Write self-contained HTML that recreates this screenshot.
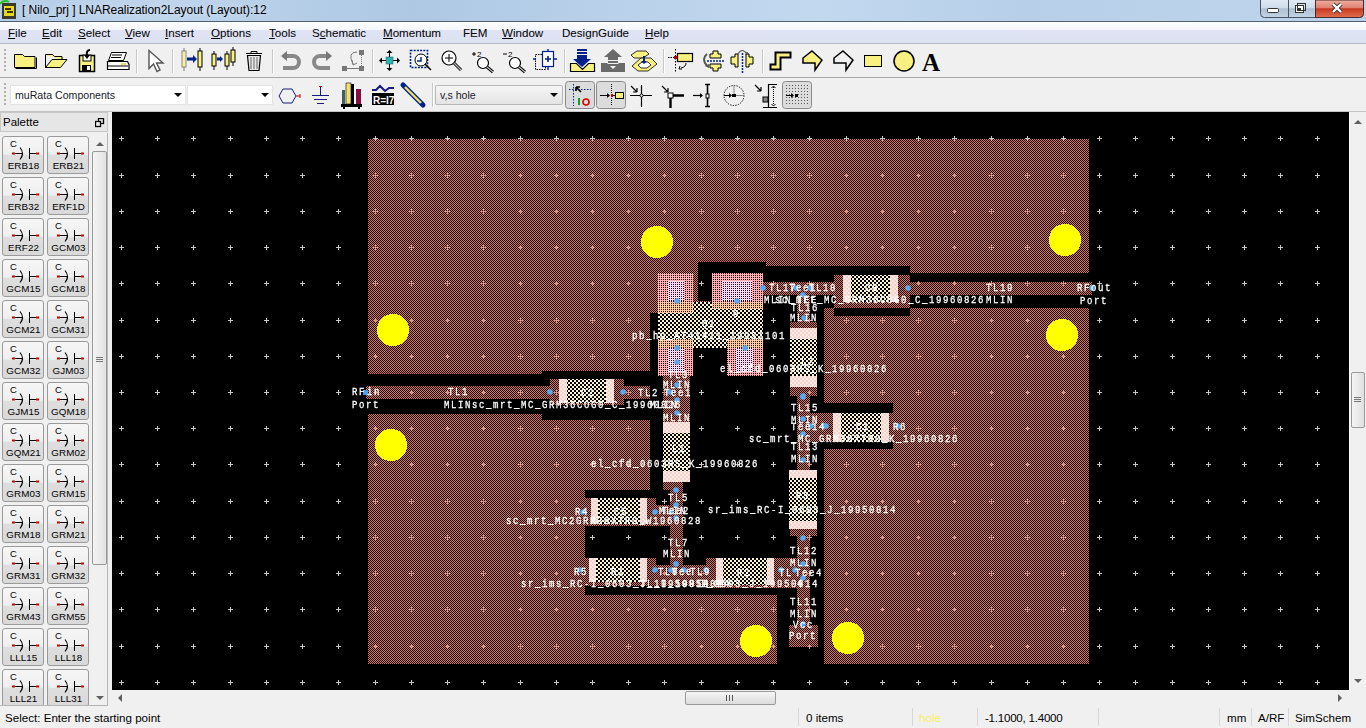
<!DOCTYPE html>
<html><head><meta charset="utf-8">
<style>
*{margin:0;padding:0;box-sizing:border-box}
html,body{width:1366px;height:728px;overflow:hidden;background:#f0f0f0;font-family:"Liberation Sans",sans-serif;position:relative}
.abs{position:absolute}
#title{left:0;top:0;width:1366px;height:22px;background:linear-gradient(90deg,#b4cde8 0%,#bed5ec 12%,#aec8e4 30%,#b9d1ea 45%,#c2d8ef 60%,#b7cfe9 75%,#bcd3eb 90%,#b9d1ea 100%);border-bottom:1px solid #545f6e}
#title .t{left:22px;top:3px;font-size:12px;color:#000;white-space:nowrap;letter-spacing:-0.05px;text-shadow:0 0 6px rgba(255,255,255,0.6)}
#menubar{left:0;top:22px;width:1366px;height:22px;background:linear-gradient(#fcfdfe 0,#f5f7fc 36%,#dfe3f3 37%,#dde2f3 100%);border-bottom:1px solid #b4b9c6}
.mi{position:absolute;top:3.5px;font-size:11.6px;white-space:nowrap;color:#000}
#tb1{left:0;top:44px;width:1366px;height:34px;background:#f0f0f0;border-bottom:1px solid #a8a8a8}
#tb2{left:0;top:78px;width:1366px;height:34px;background:#f0f0f0}
.grip{position:absolute;left:4px;width:2px;background:repeating-linear-gradient(#b0b0b0 0 2px,transparent 2px 4px)}
.combo{position:absolute;background:#fff;border:1px solid #e3e3e3;font-size:10.6px;color:#1a1a2a;white-space:nowrap;padding:3px 0 0 4px}
.dd{position:absolute;width:0;height:0;border-left:4px solid transparent;border-right:4px solid transparent;border-top:4px solid #000}
#palhead{left:0;top:112px;width:108px;height:20px;background:#e6e6e6;border:1px solid #c8c8c8}
#palhead span{position:absolute;left:2px;top:3px;font-size:11.5px;color:#000}
#palette{left:0;top:132px;width:111px;height:574px;background:#f0f0f0}
.pb{position:absolute;width:42px;height:38px;border:1px solid #9a9a9a;border-radius:3px;background:linear-gradient(#f6f6f6 0,#efefef 48%,#dedede 50%,#d9d9d9 100%)}
.pb span{position:absolute;left:0;width:41px;top:23px;text-align:center;font-size:9.8px;color:#000;letter-spacing:0.1px}
#canvasbox{left:112px;top:112px;width:1237px;height:578px;background:#000;overflow:hidden}
#vscroll{left:1349px;top:112px;width:17px;height:578px;background:#f0f0f0;border-left:1px solid #fafafa}
#hscroll{left:112px;top:690px;width:1238px;height:16px;background:#f0f0f0}
#status{left:0;top:706px;width:1366px;height:22px;background:#f0f0f0}
#status span{position:absolute;top:5px;font-size:11.6px;white-space:nowrap;color:#000}
.ssep{position:absolute;top:708px;width:1px;height:18px;background:#d8d8d8}
.lb{position:absolute;font-family:"Liberation Mono",monospace;font-size:9px;line-height:10px;color:#fff;white-space:pre;letter-spacing:1.6px;will-change:transform;transform:scaleY(1.18);transform-origin:0 0;-webkit-text-stroke:0.25px #fff}
.thumb{position:absolute;border:1px solid #9a9a9a;border-radius:2px;background:linear-gradient(90deg,#f4f4f4,#e2e2e2)}
</style></head><body>
<div id="title" class="abs"><span class="abs t">[ Nilo_prj ] LNARealization2Layout (Layout):12</span></div>
<svg class="abs" style="left:0;top:0" width="22" height="22" viewBox="0 0 22 22">
<rect x="2" y="3" width="14" height="16" fill="#3a3a2a"/><rect x="4" y="6" width="10" height="10" fill="#e8d820"/><path d="M5 9h6M7 12h6" stroke="#000" stroke-width="1.5"/>
<path d="M0 4q4 -5 9 -2" stroke="#30c030" stroke-width="2" fill="none"/>
</svg>
<svg class="abs" style="left:1258px;top:0" width="108" height="20" viewBox="0 0 108 20">
<defs><linearGradient id="wb" x1="0" y1="0" x2="0" y2="1"><stop offset="0" stop-color="#dfe9f5"/><stop offset="0.45" stop-color="#cfdcea"/><stop offset="0.5" stop-color="#aebfd4"/><stop offset="1" stop-color="#c4d4e6"/></linearGradient>
<linearGradient id="cb" x1="0" y1="0" x2="0" y2="1"><stop offset="0" stop-color="#f0b0a0"/><stop offset="0.45" stop-color="#e08070"/><stop offset="0.5" stop-color="#c83820"/><stop offset="1" stop-color="#e07050"/></linearGradient></defs>
<path d="M2.5 0v13.5a4 4 0 0 0 4 4h95a4 4 0 0 0 4 -4v-13.5" fill="url(#wb)" stroke="#4a5260"/>
<path d="M57.5 0v17.5h44a4 4 0 0 0 4 -4v-13.5z" fill="url(#cb)" stroke="#4a2a2a"/>
<path d="M30.5 0v17.5" stroke="#4a5260"/>
<rect x="9.5" y="8.5" width="11" height="4" rx="1" fill="#fff" stroke="#333"/>
<rect x="37.5" y="5.5" width="8" height="7" fill="#fff" stroke="#333"/><rect x="39.5" y="3.5" width="8" height="7" fill="none" stroke="#333"/><rect x="40" y="8" width="3" height="2" fill="#333"/>
<path d="M75 4l8 8M83 4l-8 8" stroke="#333" stroke-width="4"/><path d="M75 4l8 8M83 4l-8 8" stroke="#fff" stroke-width="2.4"/>
</svg>
<div id="menubar" class="abs">
<span class="mi" style="left:8px"><u style="text-decoration:underline">F</u>ile</span>
<span class="mi" style="left:42px"><u style="text-decoration:underline">E</u>dit</span>
<span class="mi" style="left:78px"><u style="text-decoration:underline">S</u>elect</span>
<span class="mi" style="left:125px"><u style="text-decoration:underline">V</u>iew</span>
<span class="mi" style="left:165px"><u style="text-decoration:underline">I</u>nsert</span>
<span class="mi" style="left:211px"><u style="text-decoration:underline">O</u>ptions</span>
<span class="mi" style="left:269px"><u style="text-decoration:underline">T</u>ools</span>
<span class="mi" style="left:312px">S<u style="text-decoration:underline">c</u>hematic</span>
<span class="mi" style="left:383px"><u style="text-decoration:underline">M</u>omentum</span>
<span class="mi" style="left:463px">FEM</span>
<span class="mi" style="left:502px"><u style="text-decoration:underline">W</u>indow</span>
<span class="mi" style="left:562px">DesignGuide</span>
<span class="mi" style="left:645px"><u style="text-decoration:underline">H</u>elp</span>
</div>
<div id="tb1" class="abs"><div class="grip" style="top:5px;height:24px"></div></div>
<div id="tb2" class="abs"><div class="grip" style="top:5px;height:24px"></div></div>
<svg class="abs" style="left:0;top:0" width="1366" height="112" viewBox="0 0 1366 112"><path d="M136.5 49v24" stroke="#c8c8c8"/><path d="M137.5 49v24" stroke="#fff"/><path d="M172.5 49v24" stroke="#c8c8c8"/><path d="M173.5 49v24" stroke="#fff"/><path d="M272.5 49v24" stroke="#c8c8c8"/><path d="M273.5 49v24" stroke="#fff"/><path d="M372.5 49v24" stroke="#c8c8c8"/><path d="M373.5 49v24" stroke="#fff"/><path d="M564.5 49v24" stroke="#c8c8c8"/><path d="M565.5 49v24" stroke="#fff"/><path d="M663.5 49v24" stroke="#c8c8c8"/><path d="M664.5 49v24" stroke="#fff"/><path d="M762.5 49v24" stroke="#c8c8c8"/><path d="M763.5 49v24" stroke="#fff"/><path d="M432.5 83v24" stroke="#c8c8c8"/><path d="M433.5 83v24" stroke="#fff"/><path d="M14.5 54.5h8l2 2h10.5v11h-20.5z" fill="#f8f080" stroke="#000"/><path d="M15.5 68.5h21v-11" stroke="#000" fill="none" stroke-width="1"/><path d="M45.5 54.5h7l2 2h7.5v4" fill="#f8f080" stroke="#000"/><path d="M45.5 54.5v13h15l6.5-8h-15l-6.5 8" fill="#f8f080" stroke="#000"/><path d="M79.5 55.5h15v16h-15z" fill="#f8f080" stroke="#000" stroke-width="1.5"/><rect x="83" y="55" width="8" height="6" fill="#fff" stroke="#000"/><rect x="82" y="65" width="9" height="6" fill="#000"/><rect x="87" y="66" width="3" height="4" fill="#fff"/><path d="M90 50q-4 0 -3 6" stroke="#000" stroke-width="2" fill="none"/><path d="M84 55l3 4l3-4z" fill="#000"/><path d="M111.5 52.5h15l-3 8h-15z" fill="#fff" stroke="#000"/><path d="M112 55h10M111 57.5h10" stroke="#000"/><path d="M107.5 61.5h20l1.5 3v5h-21.5z" fill="#fff" stroke="#000" stroke-width="1.2"/><path d="M108 66h20" stroke="#000"/><rect x="121" y="63" width="5" height="2" fill="#e8e070"/><path d="M149 50.5v18l4.5-4.5l3.5 7.5l3-1.5l-3.5-7h6.5z" fill="#fff" stroke="#555" stroke-width="1.4"/><rect x="182" y="51" width="4" height="16" fill="#f8f0a0" stroke="#888"/><path d="M184 48v3M184 67v4" stroke="#777"/><path d="M187 59h6" stroke="#00208a" stroke-width="3"/><path d="M193 55l4 4l-4 4z" fill="#00208a"/><rect x="198" y="51" width="4" height="16" fill="#f8f080" stroke="#000"/><path d="M200 48v3M200 67v4" stroke="#000"/><rect x="212" y="54" width="4" height="12" fill="#f8f080" stroke="#000"/><path d="M214 51v3M214 66v4" stroke="#000"/><path d="M217 59h3" stroke="#00208a" stroke-width="3"/><path d="M220 56l3 3l-3 3z" fill="#00208a"/><rect x="225" y="54" width="4" height="12" fill="#f8f080" stroke="#000"/><path d="M227 51v3M227 66v4" stroke="#000"/><rect x="231" y="50" width="4" height="12" fill="#f8f080" stroke="#000"/><path d="M233 47v3M233 62v4" stroke="#000"/><path d="M246 53.5h16M251 53.5v-2h6v2" stroke="#000" fill="#ddd"/><path d="M247.5 55.5h13l-1.5 15h-10z" fill="#e8e8e8" stroke="#000" stroke-width="1.2"/><path d="M251 57v12M254 57v12M257 57v12" stroke="#666"/><path d="M284 56h9a6 6 0 0 1 0 12h-10" stroke="#888" stroke-width="4" fill="none"/><path d="M281 56l6-5v10z" fill="#777"/><path d="M329 56h-9a6 6 0 0 0 0 12h10" stroke="#888" stroke-width="4" fill="none"/><path d="M332 56l-6-5v10z" fill="#777"/><rect x="342" y="66" width="5" height="5" fill="#777"/><rect x="359" y="66" width="5" height="5" fill="#777"/><rect x="359" y="50" width="5" height="5" fill="#777"/><path d="M347 68.5h12" stroke="#777"/><path d="M361.5 55v11" stroke="#777" stroke-dasharray="1 1"/><path d="M357 52q-10 0 -4 12" stroke="#777" fill="none"/><path d="M352 60l1 5l4-2" stroke="#777" fill="none"/><rect x="386" y="57" width="7" height="7" fill="#30b0b0" stroke="#006060" stroke-width="0.5"/><path d="M389.5 50l-3 3h6zM389.5 71l-3-3h6zM379 60.5l3-3v6zM400 60.5l-3-3v6z" fill="#000"/><path d="M389.5 52v5M389.5 64v5M381 60.5h5M393 60.5h5" stroke="#000"/><rect x="410.5" y="50.5" width="17" height="17" fill="none" stroke="#00208a" stroke-width="1.6" stroke-dasharray="2 1.2"/><circle cx="421" cy="60" r="6" fill="#fff" stroke="#000"/><path d="M425 64l6 6" stroke="#000" stroke-width="1.5"/><path d="M417 61h4v-4" stroke="#00208a" stroke-width="1.5" fill="none"/><circle cx="449" cy="58" r="7" fill="#fff" stroke="#000" stroke-width="1.2"/><path d="M445 58h8M449 54v8" stroke="#000"/><path d="M454 63l7 7" stroke="#000" stroke-width="3"/><path d="M454 63l7 7" stroke="#bbb" stroke-width="1.2"/><path d="M472 54h4M474 52v4" stroke="#000"/><text x="477" y="57" font-size="8" font-family="Liberation Sans" fill="#000">2</text><circle cx="483" cy="63" r="5.5" fill="#fff" stroke="#000" stroke-width="1.2"/><path d="M487 67l6 5" stroke="#000" stroke-width="3"/><path d="M487 67l6 5" stroke="#bbb" stroke-width="1.2"/><path d="M503 54h4" stroke="#000"/><text x="508" y="57" font-size="8" font-family="Liberation Sans" fill="#000">2</text><circle cx="515" cy="63" r="5.5" fill="#fff" stroke="#000" stroke-width="1.2"/><path d="M519 67l6 5" stroke="#000" stroke-width="3"/><path d="M519 67l6 5" stroke="#bbb" stroke-width="1.2"/><rect x="535.5" y="54.5" width="10" height="15" fill="none" stroke="#000" stroke-dasharray="1.5 1"/><rect x="542.5" y="51.5" width="11" height="15" fill="#fff" stroke="#00208a" stroke-width="1.2"/><path d="M545 59h6M548 56v6" stroke="#00208a" stroke-width="1.6"/><path d="M533 59h3M554 59h3M548 49v2M548 67v3" stroke="#00208a" stroke-width="1.4"/><path d="M570.5 63.5h6l6 6l6-6h6v8h-24z" fill="#f8f080" stroke="#000" stroke-width="1.2"/><rect x="577" y="49" width="10" height="2" fill="#00208a"/><rect x="577" y="52" width="10" height="2" fill="#00208a"/><path d="M577 55h10v4h4l-9 8l-9-8h4z" fill="#00208a"/><path d="M601 63h6l6 6l6-6h6v9h-24z" fill="#6a6a6a"/><path d="M613 49l9 8h-4v3h-10v-3h-4z" fill="#6a6a6a"/><rect x="608" y="61" width="10" height="2" fill="#6a6a6a"/><rect x="608" y="64" width="10" height="2" fill="#6a6a6a"/><path d="M637 51h9l3 3l-6 4h-9l-3-3z" fill="#f8f080" stroke="#000" stroke-width="0.8"/><path d="M632 66l9-8h10l6 6l-9 7h-10z" fill="#f8f080" stroke="#000" stroke-width="0.8"/><path d="M638 65l4-3h6l3 3l-4 3h-6z" fill="#fff" stroke="#000" stroke-width="0.8"/><path d="M643 56v5h-2l3 3l3-3h-2v-5z" fill="#00208a"/><path d="M675.5 49v24" stroke="#000" stroke-dasharray="1.5 1.5"/><path d="M668 57.5h6" stroke="#000" stroke-dasharray="1.5 1"/><rect x="674" y="56" width="3" height="3" fill="#c00000"/><rect x="677.5" y="53.5" width="15" height="8" fill="#f8f080" stroke="#000" stroke-width="1.2"/><path d="M686 63q0 4 -5 5" stroke="#000" fill="none"/><path d="M680 66l-1 3l3 0" stroke="#000" fill="none"/><path d="M713 51h5v3h3v4h-11v-4h3z" fill="#f8f080" stroke="#000"/><path d="M710 64h11v4h-3v3h-5v-3h-3z" fill="#f8f080" stroke="#000"/><path d="M707 61h17" stroke="#00208a" stroke-width="1.5" stroke-dasharray="2 1"/><path d="M707 54q-6 5 0 12" stroke="#555" stroke-width="2" fill="none"/><path d="M705 66l4 2l0-4z" fill="#555"/><path d="M731 57h4v-3h3v13h-3v-3h-4z" fill="#f8f080" stroke="#000"/><path d="M753 57h-4v-3h-3v13h3v-3h4z" fill="#f8f080" stroke="#000"/><path d="M742.5 53v20" stroke="#00208a" stroke-width="1.5" stroke-dasharray="2 1"/><path d="M738 54q4 -7 9 0" stroke="#555" stroke-width="1.2" fill="none"/><path d="M745 53l3 2l0-3z" fill="#555"/><path d="M770.5 69.5h10v-12h10v-5h-15v12h-5z" fill="#f8f080" stroke="#000" stroke-width="2" transform="translate(0,0)"/><path d="M812 51l10 9l-7 10v-7h-12v-5z" fill="#f8f080" stroke="#000" stroke-width="1.5"/><path d="M843 51l10 9l-7 10v-7h-12v-5z" fill="none" stroke="#000" stroke-width="1.5"/><rect x="864.5" y="55.5" width="17" height="11" fill="#f8f080" stroke="#000"/><circle cx="904" cy="61" r="10" fill="#f8f080" stroke="#000" stroke-width="1.5"/><text x="922" y="71" font-size="25" font-weight="bold" font-family="Liberation Serif" fill="#000">A</text><path d="M283 89h9l4 7l-4 7h-9l-4-7z" fill="none" stroke="#1a1a80" stroke-width="1"/><path d="M296 96h4M300 94v4" stroke="#c00000" stroke-width="1"/><path d="M320.5 87v8M312 95.5h17M314 99.5h13M317 103.5h7" stroke="#1a1a80" stroke-width="1"/><path d="M319 86.5h3" stroke="#c00000"/><rect x="341" y="104" width="21" height="3" fill="#000"/><rect x="343" y="106" width="2" height="3" fill="#000"/><rect x="358" y="106" width="2" height="3" fill="#000"/><rect x="342" y="90" width="3" height="14" fill="#406060"/><rect x="346" y="83" width="5" height="21" fill="#f0e070" stroke="#000" stroke-width="0.6"/><rect x="351" y="84" width="3" height="20" fill="#000"/><rect x="354" y="86" width="2" height="18" fill="#f8f8f8"/><rect x="356" y="89" width="5" height="15" fill="#801040"/><path d="M372 90h4l4-4l5 5l4-3h5" stroke="#1a1a80" stroke-width="2" fill="none"/><rect x="372" y="93" width="22" height="12" fill="#000"/><text x="373" y="104" font-size="10" font-family="Liberation Sans" fill="#fff" font-weight="bold">R=I7</text><path d="M403 85l20 20" stroke="#00208a" stroke-width="5" stroke-linecap="round"/><path d="M405 87l16 16" stroke="#f0e060" stroke-width="2.4"/><rect x="565.5" y="81.5" width="29" height="27" rx="3" fill="#dcdcdc" stroke="#8a8a8a"/><rect x="596.5" y="81.5" width="29" height="27" rx="3" fill="#dcdcdc" stroke="#8a8a8a"/><rect x="782.5" y="81.5" width="29" height="27" rx="3" fill="#dcdcdc" stroke="#8a8a8a"/><path d="M569 89.5h22M573.5 84v22" stroke="#00208a" stroke-dasharray="1.5 1.5"/><path d="M576 87l5 5M576 87h4M576 87v4" stroke="#000" stroke-width="1.6"/><path d="M579 98v7" stroke="#10a030" stroke-width="2"/><circle cx="586" cy="102" r="3" fill="none" stroke="#e00000" stroke-width="1.6"/><path d="M600 95.5h9" stroke="#000"/><path d="M607 93l3 2.5l-3 2.5z" fill="#000"/><path d="M611.5 84v22" stroke="#000" stroke-dasharray="1 1"/><rect x="611" y="94" width="2" height="3" fill="#c00000"/><path d="M613 95.5h3" stroke="#000"/><rect x="615.5" y="92.5" width="8" height="6" fill="#f8f080" stroke="#000"/><path d="M630 95.5h22M641.5 85v22" stroke="#000" stroke-width="1.2"/><circle cx="641.5" cy="95.5" r="1.5" fill="#fff" stroke="#000"/><path d="M631 86l6 6M637 92h-4M637 92v-4" stroke="#000" stroke-width="1.2"/><path d="M670.5 96v12M670 95.5h14" stroke="#000" stroke-width="2.4"/><rect x="668" y="93" width="5" height="5" fill="#fff" stroke="#000"/><path d="M662 86l6 6M668 92h-4M668 92v-4" stroke="#000" stroke-width="1.2"/><path d="M693 95.5h9" stroke="#000" stroke-width="1.2"/><path d="M700 93l3 2.5l-3 2.5z" fill="#000"/><path d="M707.5 84v23M705 84.5h5M705 106.5h5" stroke="#000" stroke-width="1.6"/><rect x="706" y="94" width="3" height="4" fill="#fff" stroke="#000"/><circle cx="734" cy="95.5" r="10" fill="none" stroke="#000" stroke-dasharray="1.3 1.3"/><path d="M734 85.5v10h10" stroke="#888" fill="none"/><path d="M724 95.5h7" stroke="#000"/><path d="M729 93l3 2.5l-3 2.5z" fill="#000"/><rect x="732" y="94" width="4" height="3" fill="#000"/><path d="M755 85l6 6M761 91h-4M761 91v-4" stroke="#000" stroke-width="1.2"/><path d="M769 84.5h8M763 107.5h14M768.5 84v23" stroke="#000" stroke-width="1.2"/><rect x="763" y="97" width="5" height="5" fill="#888" stroke="#000"/><path d="M773.5 87v18" stroke="#000" stroke-dasharray="1 1"/><path d="M771.5 88l2-2l2 2M771.5 104l2 2l2-2" stroke="#000" fill="none"/><rect x="786" y="85" width="1" height="1" fill="#555"/><rect x="786" y="88" width="1" height="1" fill="#555"/><rect x="786" y="91" width="1" height="1" fill="#555"/><rect x="786" y="94" width="1" height="1" fill="#555"/><rect x="786" y="97" width="1" height="1" fill="#555"/><rect x="786" y="100" width="1" height="1" fill="#555"/><rect x="786" y="103" width="1" height="1" fill="#555"/><rect x="789" y="85" width="1" height="1" fill="#555"/><rect x="789" y="88" width="1" height="1" fill="#555"/><rect x="789" y="91" width="1" height="1" fill="#555"/><rect x="789" y="94" width="1" height="1" fill="#555"/><rect x="789" y="97" width="1" height="1" fill="#555"/><rect x="789" y="100" width="1" height="1" fill="#555"/><rect x="789" y="103" width="1" height="1" fill="#555"/><rect x="792" y="85" width="1" height="1" fill="#555"/><rect x="792" y="88" width="1" height="1" fill="#555"/><rect x="792" y="91" width="1" height="1" fill="#555"/><rect x="792" y="94" width="1" height="1" fill="#555"/><rect x="792" y="97" width="1" height="1" fill="#555"/><rect x="792" y="100" width="1" height="1" fill="#555"/><rect x="792" y="103" width="1" height="1" fill="#555"/><rect x="795" y="85" width="1" height="1" fill="#555"/><rect x="795" y="88" width="1" height="1" fill="#555"/><rect x="795" y="91" width="1" height="1" fill="#555"/><rect x="795" y="94" width="1" height="1" fill="#555"/><rect x="795" y="97" width="1" height="1" fill="#555"/><rect x="795" y="100" width="1" height="1" fill="#555"/><rect x="795" y="103" width="1" height="1" fill="#555"/><rect x="798" y="85" width="1" height="1" fill="#555"/><rect x="798" y="88" width="1" height="1" fill="#555"/><rect x="798" y="91" width="1" height="1" fill="#555"/><rect x="798" y="94" width="1" height="1" fill="#555"/><rect x="798" y="97" width="1" height="1" fill="#555"/><rect x="798" y="100" width="1" height="1" fill="#555"/><rect x="798" y="103" width="1" height="1" fill="#555"/><rect x="801" y="85" width="1" height="1" fill="#555"/><rect x="801" y="88" width="1" height="1" fill="#555"/><rect x="801" y="91" width="1" height="1" fill="#555"/><rect x="801" y="94" width="1" height="1" fill="#555"/><rect x="801" y="97" width="1" height="1" fill="#555"/><rect x="801" y="100" width="1" height="1" fill="#555"/><rect x="801" y="103" width="1" height="1" fill="#555"/><rect x="804" y="85" width="1" height="1" fill="#555"/><rect x="804" y="88" width="1" height="1" fill="#555"/><rect x="804" y="91" width="1" height="1" fill="#555"/><rect x="804" y="94" width="1" height="1" fill="#555"/><rect x="804" y="97" width="1" height="1" fill="#555"/><rect x="804" y="100" width="1" height="1" fill="#555"/><rect x="804" y="103" width="1" height="1" fill="#555"/><rect x="807" y="85" width="1" height="1" fill="#555"/><rect x="807" y="88" width="1" height="1" fill="#555"/><rect x="807" y="91" width="1" height="1" fill="#555"/><rect x="807" y="94" width="1" height="1" fill="#555"/><rect x="807" y="97" width="1" height="1" fill="#555"/><rect x="807" y="100" width="1" height="1" fill="#555"/><rect x="807" y="103" width="1" height="1" fill="#555"/><path d="M786 95.5h7" stroke="#000"/><path d="M791 93l3 2.5l-3 2.5z" fill="#000"/><rect x="795" y="94" width="3" height="3" fill="#000"/></svg><div class="combo" style="left:10px;top:85px;width:176px;height:20px">muRata Components</div><div class="dd" style="left:174px;top:93px"></div><div class="combo" style="left:187px;top:85px;width:86px;height:20px"></div><div class="dd" style="left:261px;top:93px"></div><div class="combo" style="left:435px;top:85px;width:128px;height:20px;border:1px solid #b8b8b8;border-radius:2px;background:linear-gradient(#f6f6f6,#e4e4e4)">v,s hole</div><div class="dd" style="left:550px;top:93px"></div>
<div class="abs" style="left:0;top:111px;width:1366px;height:1px;background:#c4c4c4"></div>
<div id="palhead" class="abs"><span>Palette</span>
<svg class="abs" style="left:94px;top:5px" width="10" height="10" viewBox="0 0 10 10"><rect x="3.5" y="0.5" width="5" height="5" fill="none" stroke="#000" stroke-width="1.3"/><rect x="0.5" y="3.5" width="5" height="5" fill="#f0f0f0" stroke="#000" stroke-width="1.3"/></svg>
</div>
<div id="palette" class="abs"><div class="pb" style="left:2px;top:4px"><span>ERB18</span><svg class="abs" style="left:0;top:0" width="40" height="24" viewBox="0 0 40 24"><text x="7" y="10" font-size="9.5" font-family="Liberation Sans" fill="#000">C</text><path d="M10 16.5h9M27 16.5h8M26.5 11v11" stroke="#000" stroke-width="1"/><path d="M17 10.5q5 6 0 12" stroke="#000" fill="none" stroke-width="1.1"/><rect x="9" y="15.5" width="3" height="2" fill="#d00000"/><rect x="33" y="15.5" width="3" height="2" fill="#d00000"/></svg></div><div class="pb" style="left:47px;top:4px"><span>ERB21</span><svg class="abs" style="left:0;top:0" width="40" height="24" viewBox="0 0 40 24"><text x="7" y="10" font-size="9.5" font-family="Liberation Sans" fill="#000">C</text><path d="M10 16.5h9M27 16.5h8M26.5 11v11" stroke="#000" stroke-width="1"/><path d="M17 10.5q5 6 0 12" stroke="#000" fill="none" stroke-width="1.1"/><rect x="9" y="15.5" width="3" height="2" fill="#d00000"/><rect x="33" y="15.5" width="3" height="2" fill="#d00000"/></svg></div><div class="pb" style="left:2px;top:45px"><span>ERB32</span><svg class="abs" style="left:0;top:0" width="40" height="24" viewBox="0 0 40 24"><text x="7" y="10" font-size="9.5" font-family="Liberation Sans" fill="#000">C</text><path d="M10 16.5h9M27 16.5h8M26.5 11v11" stroke="#000" stroke-width="1"/><path d="M17 10.5q5 6 0 12" stroke="#000" fill="none" stroke-width="1.1"/><rect x="9" y="15.5" width="3" height="2" fill="#d00000"/><rect x="33" y="15.5" width="3" height="2" fill="#d00000"/></svg></div><div class="pb" style="left:47px;top:45px"><span>ERF1D</span><svg class="abs" style="left:0;top:0" width="40" height="24" viewBox="0 0 40 24"><text x="7" y="10" font-size="9.5" font-family="Liberation Sans" fill="#000">C</text><path d="M10 16.5h9M27 16.5h8M26.5 11v11" stroke="#000" stroke-width="1"/><path d="M17 10.5q5 6 0 12" stroke="#000" fill="none" stroke-width="1.1"/><rect x="9" y="15.5" width="3" height="2" fill="#d00000"/><rect x="33" y="15.5" width="3" height="2" fill="#d00000"/></svg></div><div class="pb" style="left:2px;top:86px"><span>ERF22</span><svg class="abs" style="left:0;top:0" width="40" height="24" viewBox="0 0 40 24"><text x="7" y="10" font-size="9.5" font-family="Liberation Sans" fill="#000">C</text><path d="M10 16.5h9M27 16.5h8M26.5 11v11" stroke="#000" stroke-width="1"/><path d="M17 10.5q5 6 0 12" stroke="#000" fill="none" stroke-width="1.1"/><rect x="9" y="15.5" width="3" height="2" fill="#d00000"/><rect x="33" y="15.5" width="3" height="2" fill="#d00000"/></svg></div><div class="pb" style="left:47px;top:86px"><span>GCM03</span><svg class="abs" style="left:0;top:0" width="40" height="24" viewBox="0 0 40 24"><text x="7" y="10" font-size="9.5" font-family="Liberation Sans" fill="#000">C</text><path d="M10 16.5h9M27 16.5h8M26.5 11v11" stroke="#000" stroke-width="1"/><path d="M17 10.5q5 6 0 12" stroke="#000" fill="none" stroke-width="1.1"/><rect x="9" y="15.5" width="3" height="2" fill="#d00000"/><rect x="33" y="15.5" width="3" height="2" fill="#d00000"/></svg></div><div class="pb" style="left:2px;top:127px"><span>GCM15</span><svg class="abs" style="left:0;top:0" width="40" height="24" viewBox="0 0 40 24"><text x="7" y="10" font-size="9.5" font-family="Liberation Sans" fill="#000">C</text><path d="M10 16.5h9M27 16.5h8M26.5 11v11" stroke="#000" stroke-width="1"/><path d="M17 10.5q5 6 0 12" stroke="#000" fill="none" stroke-width="1.1"/><rect x="9" y="15.5" width="3" height="2" fill="#d00000"/><rect x="33" y="15.5" width="3" height="2" fill="#d00000"/></svg></div><div class="pb" style="left:47px;top:127px"><span>GCM18</span><svg class="abs" style="left:0;top:0" width="40" height="24" viewBox="0 0 40 24"><text x="7" y="10" font-size="9.5" font-family="Liberation Sans" fill="#000">C</text><path d="M10 16.5h9M27 16.5h8M26.5 11v11" stroke="#000" stroke-width="1"/><path d="M17 10.5q5 6 0 12" stroke="#000" fill="none" stroke-width="1.1"/><rect x="9" y="15.5" width="3" height="2" fill="#d00000"/><rect x="33" y="15.5" width="3" height="2" fill="#d00000"/></svg></div><div class="pb" style="left:2px;top:168px"><span>GCM21</span><svg class="abs" style="left:0;top:0" width="40" height="24" viewBox="0 0 40 24"><text x="7" y="10" font-size="9.5" font-family="Liberation Sans" fill="#000">C</text><path d="M10 16.5h9M27 16.5h8M26.5 11v11" stroke="#000" stroke-width="1"/><path d="M17 10.5q5 6 0 12" stroke="#000" fill="none" stroke-width="1.1"/><rect x="9" y="15.5" width="3" height="2" fill="#d00000"/><rect x="33" y="15.5" width="3" height="2" fill="#d00000"/></svg></div><div class="pb" style="left:47px;top:168px"><span>GCM31</span><svg class="abs" style="left:0;top:0" width="40" height="24" viewBox="0 0 40 24"><text x="7" y="10" font-size="9.5" font-family="Liberation Sans" fill="#000">C</text><path d="M10 16.5h9M27 16.5h8M26.5 11v11" stroke="#000" stroke-width="1"/><path d="M17 10.5q5 6 0 12" stroke="#000" fill="none" stroke-width="1.1"/><rect x="9" y="15.5" width="3" height="2" fill="#d00000"/><rect x="33" y="15.5" width="3" height="2" fill="#d00000"/></svg></div><div class="pb" style="left:2px;top:209px"><span>GCM32</span><svg class="abs" style="left:0;top:0" width="40" height="24" viewBox="0 0 40 24"><text x="7" y="10" font-size="9.5" font-family="Liberation Sans" fill="#000">C</text><path d="M10 16.5h9M27 16.5h8M26.5 11v11" stroke="#000" stroke-width="1"/><path d="M17 10.5q5 6 0 12" stroke="#000" fill="none" stroke-width="1.1"/><rect x="9" y="15.5" width="3" height="2" fill="#d00000"/><rect x="33" y="15.5" width="3" height="2" fill="#d00000"/></svg></div><div class="pb" style="left:47px;top:209px"><span>GJM03</span><svg class="abs" style="left:0;top:0" width="40" height="24" viewBox="0 0 40 24"><text x="7" y="10" font-size="9.5" font-family="Liberation Sans" fill="#000">C</text><path d="M10 16.5h9M27 16.5h8M26.5 11v11" stroke="#000" stroke-width="1"/><path d="M17 10.5q5 6 0 12" stroke="#000" fill="none" stroke-width="1.1"/><rect x="9" y="15.5" width="3" height="2" fill="#d00000"/><rect x="33" y="15.5" width="3" height="2" fill="#d00000"/></svg></div><div class="pb" style="left:2px;top:250px"><span>GJM15</span><svg class="abs" style="left:0;top:0" width="40" height="24" viewBox="0 0 40 24"><text x="7" y="10" font-size="9.5" font-family="Liberation Sans" fill="#000">C</text><path d="M10 16.5h9M27 16.5h8M26.5 11v11" stroke="#000" stroke-width="1"/><path d="M17 10.5q5 6 0 12" stroke="#000" fill="none" stroke-width="1.1"/><rect x="9" y="15.5" width="3" height="2" fill="#d00000"/><rect x="33" y="15.5" width="3" height="2" fill="#d00000"/></svg></div><div class="pb" style="left:47px;top:250px"><span>GQM18</span><svg class="abs" style="left:0;top:0" width="40" height="24" viewBox="0 0 40 24"><text x="7" y="10" font-size="9.5" font-family="Liberation Sans" fill="#000">C</text><path d="M10 16.5h9M27 16.5h8M26.5 11v11" stroke="#000" stroke-width="1"/><path d="M17 10.5q5 6 0 12" stroke="#000" fill="none" stroke-width="1.1"/><rect x="9" y="15.5" width="3" height="2" fill="#d00000"/><rect x="33" y="15.5" width="3" height="2" fill="#d00000"/></svg></div><div class="pb" style="left:2px;top:291px"><span>GQM21</span><svg class="abs" style="left:0;top:0" width="40" height="24" viewBox="0 0 40 24"><text x="7" y="10" font-size="9.5" font-family="Liberation Sans" fill="#000">C</text><path d="M10 16.5h9M27 16.5h8M26.5 11v11" stroke="#000" stroke-width="1"/><path d="M17 10.5q5 6 0 12" stroke="#000" fill="none" stroke-width="1.1"/><rect x="9" y="15.5" width="3" height="2" fill="#d00000"/><rect x="33" y="15.5" width="3" height="2" fill="#d00000"/></svg></div><div class="pb" style="left:47px;top:291px"><span>GRM02</span><svg class="abs" style="left:0;top:0" width="40" height="24" viewBox="0 0 40 24"><text x="7" y="10" font-size="9.5" font-family="Liberation Sans" fill="#000">C</text><path d="M10 16.5h9M27 16.5h8M26.5 11v11" stroke="#000" stroke-width="1"/><path d="M17 10.5q5 6 0 12" stroke="#000" fill="none" stroke-width="1.1"/><rect x="9" y="15.5" width="3" height="2" fill="#d00000"/><rect x="33" y="15.5" width="3" height="2" fill="#d00000"/></svg></div><div class="pb" style="left:2px;top:332px"><span>GRM03</span><svg class="abs" style="left:0;top:0" width="40" height="24" viewBox="0 0 40 24"><text x="7" y="10" font-size="9.5" font-family="Liberation Sans" fill="#000">C</text><path d="M10 16.5h9M27 16.5h8M26.5 11v11" stroke="#000" stroke-width="1"/><path d="M17 10.5q5 6 0 12" stroke="#000" fill="none" stroke-width="1.1"/><rect x="9" y="15.5" width="3" height="2" fill="#d00000"/><rect x="33" y="15.5" width="3" height="2" fill="#d00000"/></svg></div><div class="pb" style="left:47px;top:332px"><span>GRM15</span><svg class="abs" style="left:0;top:0" width="40" height="24" viewBox="0 0 40 24"><text x="7" y="10" font-size="9.5" font-family="Liberation Sans" fill="#000">C</text><path d="M10 16.5h9M27 16.5h8M26.5 11v11" stroke="#000" stroke-width="1"/><path d="M17 10.5q5 6 0 12" stroke="#000" fill="none" stroke-width="1.1"/><rect x="9" y="15.5" width="3" height="2" fill="#d00000"/><rect x="33" y="15.5" width="3" height="2" fill="#d00000"/></svg></div><div class="pb" style="left:2px;top:373px"><span>GRM18</span><svg class="abs" style="left:0;top:0" width="40" height="24" viewBox="0 0 40 24"><text x="7" y="10" font-size="9.5" font-family="Liberation Sans" fill="#000">C</text><path d="M10 16.5h9M27 16.5h8M26.5 11v11" stroke="#000" stroke-width="1"/><path d="M17 10.5q5 6 0 12" stroke="#000" fill="none" stroke-width="1.1"/><rect x="9" y="15.5" width="3" height="2" fill="#d00000"/><rect x="33" y="15.5" width="3" height="2" fill="#d00000"/></svg></div><div class="pb" style="left:47px;top:373px"><span>GRM21</span><svg class="abs" style="left:0;top:0" width="40" height="24" viewBox="0 0 40 24"><text x="7" y="10" font-size="9.5" font-family="Liberation Sans" fill="#000">C</text><path d="M10 16.5h9M27 16.5h8M26.5 11v11" stroke="#000" stroke-width="1"/><path d="M17 10.5q5 6 0 12" stroke="#000" fill="none" stroke-width="1.1"/><rect x="9" y="15.5" width="3" height="2" fill="#d00000"/><rect x="33" y="15.5" width="3" height="2" fill="#d00000"/></svg></div><div class="pb" style="left:2px;top:414px"><span>GRM31</span><svg class="abs" style="left:0;top:0" width="40" height="24" viewBox="0 0 40 24"><text x="7" y="10" font-size="9.5" font-family="Liberation Sans" fill="#000">C</text><path d="M10 16.5h9M27 16.5h8M26.5 11v11" stroke="#000" stroke-width="1"/><path d="M17 10.5q5 6 0 12" stroke="#000" fill="none" stroke-width="1.1"/><rect x="9" y="15.5" width="3" height="2" fill="#d00000"/><rect x="33" y="15.5" width="3" height="2" fill="#d00000"/></svg></div><div class="pb" style="left:47px;top:414px"><span>GRM32</span><svg class="abs" style="left:0;top:0" width="40" height="24" viewBox="0 0 40 24"><text x="7" y="10" font-size="9.5" font-family="Liberation Sans" fill="#000">C</text><path d="M10 16.5h9M27 16.5h8M26.5 11v11" stroke="#000" stroke-width="1"/><path d="M17 10.5q5 6 0 12" stroke="#000" fill="none" stroke-width="1.1"/><rect x="9" y="15.5" width="3" height="2" fill="#d00000"/><rect x="33" y="15.5" width="3" height="2" fill="#d00000"/></svg></div><div class="pb" style="left:2px;top:455px"><span>GRM43</span><svg class="abs" style="left:0;top:0" width="40" height="24" viewBox="0 0 40 24"><text x="7" y="10" font-size="9.5" font-family="Liberation Sans" fill="#000">C</text><path d="M10 16.5h9M27 16.5h8M26.5 11v11" stroke="#000" stroke-width="1"/><path d="M17 10.5q5 6 0 12" stroke="#000" fill="none" stroke-width="1.1"/><rect x="9" y="15.5" width="3" height="2" fill="#d00000"/><rect x="33" y="15.5" width="3" height="2" fill="#d00000"/></svg></div><div class="pb" style="left:47px;top:455px"><span>GRM55</span><svg class="abs" style="left:0;top:0" width="40" height="24" viewBox="0 0 40 24"><text x="7" y="10" font-size="9.5" font-family="Liberation Sans" fill="#000">C</text><path d="M10 16.5h9M27 16.5h8M26.5 11v11" stroke="#000" stroke-width="1"/><path d="M17 10.5q5 6 0 12" stroke="#000" fill="none" stroke-width="1.1"/><rect x="9" y="15.5" width="3" height="2" fill="#d00000"/><rect x="33" y="15.5" width="3" height="2" fill="#d00000"/></svg></div><div class="pb" style="left:2px;top:496px"><span>LLL15</span><svg class="abs" style="left:0;top:0" width="40" height="24" viewBox="0 0 40 24"><text x="7" y="10" font-size="9.5" font-family="Liberation Sans" fill="#000">C</text><path d="M10 16.5h9M27 16.5h8M26.5 11v11" stroke="#000" stroke-width="1"/><path d="M17 10.5q5 6 0 12" stroke="#000" fill="none" stroke-width="1.1"/><rect x="9" y="15.5" width="3" height="2" fill="#d00000"/><rect x="33" y="15.5" width="3" height="2" fill="#d00000"/></svg></div><div class="pb" style="left:47px;top:496px"><span>LLL18</span><svg class="abs" style="left:0;top:0" width="40" height="24" viewBox="0 0 40 24"><text x="7" y="10" font-size="9.5" font-family="Liberation Sans" fill="#000">C</text><path d="M10 16.5h9M27 16.5h8M26.5 11v11" stroke="#000" stroke-width="1"/><path d="M17 10.5q5 6 0 12" stroke="#000" fill="none" stroke-width="1.1"/><rect x="9" y="15.5" width="3" height="2" fill="#d00000"/><rect x="33" y="15.5" width="3" height="2" fill="#d00000"/></svg></div><div class="pb" style="left:2px;top:537px"><span>LLL21</span><svg class="abs" style="left:0;top:0" width="40" height="24" viewBox="0 0 40 24"><text x="7" y="10" font-size="9.5" font-family="Liberation Sans" fill="#000">C</text><path d="M10 16.5h9M27 16.5h8M26.5 11v11" stroke="#000" stroke-width="1"/><path d="M17 10.5q5 6 0 12" stroke="#000" fill="none" stroke-width="1.1"/><rect x="9" y="15.5" width="3" height="2" fill="#d00000"/><rect x="33" y="15.5" width="3" height="2" fill="#d00000"/></svg></div><div class="pb" style="left:47px;top:537px"><span>LLL31</span><svg class="abs" style="left:0;top:0" width="40" height="24" viewBox="0 0 40 24"><text x="7" y="10" font-size="9.5" font-family="Liberation Sans" fill="#000">C</text><path d="M10 16.5h9M27 16.5h8M26.5 11v11" stroke="#000" stroke-width="1"/><path d="M17 10.5q5 6 0 12" stroke="#000" fill="none" stroke-width="1.1"/><rect x="9" y="15.5" width="3" height="2" fill="#d00000"/><rect x="33" y="15.5" width="3" height="2" fill="#d00000"/></svg></div><div class="abs" style="left:91px;top:4px;width:17px;height:570px;background:#f0f0f0"></div><div class="abs" style="left:96px;top:10px;width:0;height:0;border-left:4px solid transparent;border-right:4px solid transparent;border-bottom:4px solid #606060"></div><div class="thumb" style="left:92px;top:19px;width:15px;height:414px"></div><div class="abs" style="left:96px;top:225px;width:7px;height:5px;border-top:1px solid #777;border-bottom:1px solid #777"></div><div class="abs" style="left:96px;top:227px;width:7px;height:1px;background:#777"></div><div class="abs" style="left:96px;top:564px;width:0;height:0;border-left:4px solid transparent;border-right:4px solid transparent;border-top:4px solid #606060"></div></div>
<div class="abs" style="left:107px;top:133px;width:1px;height:573px;background:#b4b4b4"></div><div class="abs" style="left:0;top:705px;width:108px;height:1px;background:#b4b4b4"></div>
<div id="canvasbox" class="abs"></div>
<svg class="abs" style="left:112px;top:112px" width="1237" height="578" viewBox="112 112 1237 578" shape-rendering="crispEdges">
<defs>
<pattern id="cu" width="2" height="2" patternUnits="userSpaceOnUse"><rect width="2" height="2" fill="#240202"/><rect x="1" y="0" width="1" height="1" fill="#c47868"/><rect x="0" y="1" width="1" height="1" fill="#cc7e6e"/></pattern>
<pattern id="pad" width="2" height="2" patternUnits="userSpaceOnUse"><rect width="2" height="2" fill="#ffb0b4"/><rect x="1" y="1" width="1" height="1" fill="#200000"/></pattern>
<pattern id="padin" width="2" height="2" patternUnits="userSpaceOnUse"><rect width="2" height="2" fill="#ffe4f8"/><rect x="1" y="0" width="1" height="1" fill="#280020"/><rect x="0" y="1" width="1" height="1" fill="#ffd0ec"/></pattern>
<pattern id="body" width="4" height="4" patternUnits="userSpaceOnUse"><rect width="4" height="4" fill="#000"/><rect x="2" y="0" width="2" height="2" fill="#fff4d2"/><rect x="0" y="2" width="2" height="2" fill="#fff4d2"/></pattern>
<pattern id="band" width="2" height="2" patternUnits="userSpaceOnUse"><rect width="2" height="2" fill="#ffd0a8"/><rect x="1" y="0" width="1" height="1" fill="#ffb8a0"/><rect x="1" y="1" width="1" height="1" fill="#301000"/></pattern>
<pattern id="term" width="4" height="4" patternUnits="userSpaceOnUse"><rect width="4" height="4" fill="#ffe4ec"/><rect x="2" y="0" width="2" height="2" fill="#ecd8c4"/><rect x="0" y="2" width="2" height="2" fill="#ecd8c4"/></pattern>
</defs>
<rect x="112" y="112" width="1238" height="578" fill="#000"/>
<rect x="368" y="139" width="721" height="525" fill="url(#cu)"/><rect x="368" y="374" width="174" height="40" fill="#000"/><rect x="542" y="371" width="121" height="49" fill="#000"/><rect x="366" y="386" width="297" height="13" fill="url(#cu)"/><rect x="550" y="379" width="74" height="26" fill="url(#cu)"/><rect x="650" y="313" width="13" height="177" fill="#000"/><rect x="698" y="262" width="68" height="39" fill="#000"/><rect x="766" y="266" width="144" height="16" fill="#000"/><rect x="910" y="273" width="179" height="9" fill="#000"/><rect x="910" y="295" width="179" height="13" fill="#000"/><rect x="834" y="308" width="76" height="8" fill="#000"/><rect x="762" y="294" width="35" height="264" fill="#000"/><rect x="810" y="294" width="14" height="370" fill="#000"/><rect x="817" y="294" width="17" height="14" fill="#000"/><rect x="762" y="282" width="72" height="13" fill="url(#cu)"/><rect x="834" y="275" width="76" height="33" fill="url(#cu)"/><rect x="910" y="282" width="182" height="13" fill="url(#cu)"/><rect x="797" y="295" width="13" height="27" fill="url(#cu)"/><rect x="790" y="322" width="27" height="74" fill="url(#cu)"/><rect x="797" y="396" width="13" height="74" fill="url(#cu)"/><rect x="790" y="470" width="27" height="66" fill="url(#cu)"/><rect x="797" y="536" width="13" height="89" fill="url(#cu)"/><rect x="789" y="625" width="29" height="22" fill="url(#cu)"/><rect x="777" y="588" width="20" height="37" fill="#000"/><rect x="777" y="625" width="12" height="39" fill="#000"/><rect x="789" y="647" width="35" height="17" fill="#000"/><rect x="817" y="403" width="76" height="10" fill="#000"/><rect x="817" y="442" width="76" height="7" fill="#000"/><rect x="810" y="413" width="83" height="29" fill="url(#cu)"/><rect x="690" y="348" width="100" height="210" fill="#000"/><rect x="693" y="348" width="34" height="28" fill="#000"/><rect x="663" y="376" width="27" height="105" fill="url(#cu)"/><rect x="585" y="490" width="85" height="8" fill="#000"/><rect x="656" y="498" width="14" height="7" fill="#000"/><rect x="585" y="498" width="71" height="28" fill="url(#cu)"/><rect x="646" y="505" width="24" height="21" fill="url(#cu)"/><rect x="585" y="526" width="85" height="32" fill="#000"/><rect x="683" y="481" width="7" height="84" fill="#000"/><rect x="670" y="481" width="13" height="84" fill="url(#cu)"/><rect x="656" y="558" width="14" height="7" fill="#000"/><rect x="683" y="558" width="23" height="7" fill="#000"/><rect x="585" y="558" width="71" height="28" fill="url(#cu)"/><rect x="656" y="565" width="50" height="14" fill="url(#cu)"/><rect x="706" y="558" width="77" height="30" fill="url(#cu)"/><rect x="783" y="564" width="14" height="14" fill="url(#cu)"/><rect x="585" y="586" width="121" height="9" fill="#000"/><rect x="706" y="588" width="71" height="7" fill="#000"/><rect x="559" y="379" width="8" height="24" fill="url(#term)"/><rect x="567" y="379" width="39" height="24" fill="url(#body)"/><rect x="606" y="379" width="8" height="24" fill="url(#term)"/><rect x="843" y="275" width="8" height="27" fill="url(#term)"/><rect x="851" y="275" width="39" height="27" fill="url(#body)"/><rect x="890" y="275" width="8" height="27" fill="url(#term)"/><rect x="833" y="413" width="8" height="29" fill="url(#term)"/><rect x="841" y="413" width="40" height="29" fill="url(#body)"/><rect x="881" y="413" width="8" height="29" fill="url(#term)"/><rect x="591" y="498" width="7" height="26" fill="url(#term)"/><rect x="598" y="498" width="42" height="26" fill="url(#body)"/><rect x="640" y="498" width="7" height="26" fill="url(#term)"/><rect x="589" y="558" width="7" height="24" fill="url(#term)"/><rect x="596" y="558" width="44" height="24" fill="url(#body)"/><rect x="640" y="558" width="7" height="24" fill="url(#term)"/><rect x="716" y="558" width="7" height="27" fill="url(#term)"/><rect x="723" y="558" width="44" height="27" fill="url(#body)"/><rect x="767" y="558" width="7" height="27" fill="url(#term)"/><rect x="790" y="328" width="27" height="11" fill="url(#term)"/><rect x="790" y="339" width="27" height="37" fill="url(#body)"/><rect x="790" y="376" width="27" height="11" fill="url(#term)"/><rect x="663" y="422" width="27" height="11" fill="url(#term)"/><rect x="663" y="433" width="27" height="38" fill="url(#body)"/><rect x="663" y="471" width="27" height="11" fill="url(#term)"/><rect x="789" y="470" width="28" height="8" fill="url(#term)"/><rect x="789" y="478" width="28" height="43" fill="url(#body)"/><rect x="789" y="521" width="28" height="8" fill="url(#term)"/><rect x="658" y="302" width="105" height="46" fill="url(#body)"/><rect x="658" y="273" width="35" height="40" fill="url(#pad)"/><rect x="712" y="273" width="51" height="36" fill="url(#pad)"/><rect x="658" y="339" width="35" height="37" fill="url(#pad)"/><rect x="727" y="339" width="36" height="37" fill="url(#pad)"/><rect x="658" y="302" width="35" height="11" fill="url(#band)"/><rect x="712" y="302" width="51" height="7" fill="url(#band)"/><rect x="658" y="339" width="35" height="9" fill="url(#band)"/><rect x="727" y="339" width="36" height="9" fill="url(#band)"/><rect x="668" y="281" width="16" height="20" fill="url(#padin)"/><rect x="722" y="281" width="30" height="20" fill="url(#padin)"/><rect x="668" y="348" width="16" height="24" fill="url(#padin)"/><rect x="736" y="348" width="17" height="24" fill="url(#padin)"/><path d="M119 138.5h5M121.5 136v5M119 175.5h5M121.5 173v5M119 211.5h5M121.5 209v5M119 247.5h5M121.5 245v5M119 283.5h5M121.5 281v5M119 320.5h5M121.5 318v5M119 356.5h5M121.5 354v5M119 392.5h5M121.5 390v5M119 428.5h5M121.5 426v5M119 464.5h5M121.5 462v5M119 501.5h5M121.5 499v5M119 537.5h5M121.5 535v5M119 573.5h5M121.5 571v5M119 609.5h5M121.5 607v5M119 646.5h5M121.5 644v5M119 682.5h5M121.5 680v5M155 138.5h5M157.5 136v5M155 175.5h5M157.5 173v5M155 211.5h5M157.5 209v5M155 247.5h5M157.5 245v5M155 283.5h5M157.5 281v5M155 320.5h5M157.5 318v5M155 356.5h5M157.5 354v5M155 392.5h5M157.5 390v5M155 428.5h5M157.5 426v5M155 464.5h5M157.5 462v5M155 501.5h5M157.5 499v5M155 537.5h5M157.5 535v5M155 573.5h5M157.5 571v5M155 609.5h5M157.5 607v5M155 646.5h5M157.5 644v5M155 682.5h5M157.5 680v5M191 138.5h5M193.5 136v5M191 175.5h5M193.5 173v5M191 211.5h5M193.5 209v5M191 247.5h5M193.5 245v5M191 283.5h5M193.5 281v5M191 320.5h5M193.5 318v5M191 356.5h5M193.5 354v5M191 392.5h5M193.5 390v5M191 428.5h5M193.5 426v5M191 464.5h5M193.5 462v5M191 501.5h5M193.5 499v5M191 537.5h5M193.5 535v5M191 573.5h5M193.5 571v5M191 609.5h5M193.5 607v5M191 646.5h5M193.5 644v5M191 682.5h5M193.5 680v5M228 138.5h5M230.5 136v5M228 175.5h5M230.5 173v5M228 211.5h5M230.5 209v5M228 247.5h5M230.5 245v5M228 283.5h5M230.5 281v5M228 320.5h5M230.5 318v5M228 356.5h5M230.5 354v5M228 392.5h5M230.5 390v5M228 428.5h5M230.5 426v5M228 464.5h5M230.5 462v5M228 501.5h5M230.5 499v5M228 537.5h5M230.5 535v5M228 573.5h5M230.5 571v5M228 609.5h5M230.5 607v5M228 646.5h5M230.5 644v5M228 682.5h5M230.5 680v5M264 138.5h5M266.5 136v5M264 175.5h5M266.5 173v5M264 211.5h5M266.5 209v5M264 247.5h5M266.5 245v5M264 283.5h5M266.5 281v5M264 320.5h5M266.5 318v5M264 356.5h5M266.5 354v5M264 392.5h5M266.5 390v5M264 428.5h5M266.5 426v5M264 464.5h5M266.5 462v5M264 501.5h5M266.5 499v5M264 537.5h5M266.5 535v5M264 573.5h5M266.5 571v5M264 609.5h5M266.5 607v5M264 646.5h5M266.5 644v5M264 682.5h5M266.5 680v5M300 138.5h5M302.5 136v5M300 175.5h5M302.5 173v5M300 211.5h5M302.5 209v5M300 247.5h5M302.5 245v5M300 283.5h5M302.5 281v5M300 320.5h5M302.5 318v5M300 356.5h5M302.5 354v5M300 392.5h5M302.5 390v5M300 428.5h5M302.5 426v5M300 464.5h5M302.5 462v5M300 501.5h5M302.5 499v5M300 537.5h5M302.5 535v5M300 573.5h5M302.5 571v5M300 609.5h5M302.5 607v5M300 646.5h5M302.5 644v5M300 682.5h5M302.5 680v5M336 138.5h5M338.5 136v5M336 175.5h5M338.5 173v5M336 211.5h5M338.5 209v5M336 247.5h5M338.5 245v5M336 283.5h5M338.5 281v5M336 320.5h5M338.5 318v5M336 356.5h5M338.5 354v5M336 392.5h5M338.5 390v5M336 428.5h5M338.5 426v5M336 464.5h5M338.5 462v5M336 501.5h5M338.5 499v5M336 537.5h5M338.5 535v5M336 573.5h5M338.5 571v5M336 609.5h5M338.5 607v5M336 646.5h5M338.5 644v5M336 682.5h5M338.5 680v5M373 138.5h5M375.5 136v5M373 682.5h5M375.5 680v5M409 138.5h5M411.5 136v5M409 682.5h5M411.5 680v5M445 138.5h5M447.5 136v5M445 682.5h5M447.5 680v5M481 138.5h5M483.5 136v5M481 682.5h5M483.5 680v5M518 138.5h5M520.5 136v5M518 682.5h5M520.5 680v5M554 138.5h5M556.5 136v5M554 682.5h5M556.5 680v5M590 138.5h5M592.5 136v5M590 537.5h5M592.5 535v5M590 682.5h5M592.5 680v5M626 138.5h5M628.5 136v5M626 537.5h5M628.5 535v5M626 682.5h5M628.5 680v5M662 138.5h5M664.5 136v5M662 501.5h5M664.5 499v5M662 537.5h5M664.5 535v5M662 682.5h5M664.5 680v5M699 138.5h5M701.5 136v5M699 283.5h5M701.5 281v5M699 356.5h5M701.5 354v5M699 392.5h5M701.5 390v5M699 428.5h5M701.5 426v5M699 464.5h5M701.5 462v5M699 501.5h5M701.5 499v5M699 537.5h5M701.5 535v5M699 682.5h5M701.5 680v5M735 138.5h5M737.5 136v5M735 392.5h5M737.5 390v5M735 428.5h5M737.5 426v5M735 464.5h5M737.5 462v5M735 501.5h5M737.5 499v5M735 537.5h5M737.5 535v5M735 682.5h5M737.5 680v5M771 138.5h5M773.5 136v5M771 320.5h5M773.5 318v5M771 356.5h5M773.5 354v5M771 392.5h5M773.5 390v5M771 428.5h5M773.5 426v5M771 464.5h5M773.5 462v5M771 501.5h5M773.5 499v5M771 537.5h5M773.5 535v5M771 682.5h5M773.5 680v5M807 138.5h5M809.5 136v5M807 682.5h5M809.5 680v5M844 138.5h5M846.5 136v5M844 682.5h5M846.5 680v5M880 138.5h5M882.5 136v5M880 682.5h5M882.5 680v5M916 138.5h5M918.5 136v5M916 682.5h5M918.5 680v5M952 138.5h5M954.5 136v5M952 682.5h5M954.5 680v5M989 138.5h5M991.5 136v5M989 682.5h5M991.5 680v5M1025 138.5h5M1027.5 136v5M1025 682.5h5M1027.5 680v5M1061 138.5h5M1063.5 136v5M1061 682.5h5M1063.5 680v5M1097 138.5h5M1099.5 136v5M1097 175.5h5M1099.5 173v5M1097 211.5h5M1099.5 209v5M1097 247.5h5M1099.5 245v5M1097 283.5h5M1099.5 281v5M1097 320.5h5M1099.5 318v5M1097 356.5h5M1099.5 354v5M1097 392.5h5M1099.5 390v5M1097 428.5h5M1099.5 426v5M1097 464.5h5M1099.5 462v5M1097 501.5h5M1099.5 499v5M1097 537.5h5M1099.5 535v5M1097 573.5h5M1099.5 571v5M1097 609.5h5M1099.5 607v5M1097 646.5h5M1099.5 644v5M1097 682.5h5M1099.5 680v5M1133 138.5h5M1135.5 136v5M1133 175.5h5M1135.5 173v5M1133 211.5h5M1135.5 209v5M1133 247.5h5M1135.5 245v5M1133 283.5h5M1135.5 281v5M1133 320.5h5M1135.5 318v5M1133 356.5h5M1135.5 354v5M1133 392.5h5M1135.5 390v5M1133 428.5h5M1135.5 426v5M1133 464.5h5M1135.5 462v5M1133 501.5h5M1135.5 499v5M1133 537.5h5M1135.5 535v5M1133 573.5h5M1135.5 571v5M1133 609.5h5M1135.5 607v5M1133 646.5h5M1135.5 644v5M1133 682.5h5M1135.5 680v5M1170 138.5h5M1172.5 136v5M1170 175.5h5M1172.5 173v5M1170 211.5h5M1172.5 209v5M1170 247.5h5M1172.5 245v5M1170 283.5h5M1172.5 281v5M1170 320.5h5M1172.5 318v5M1170 356.5h5M1172.5 354v5M1170 392.5h5M1172.5 390v5M1170 428.5h5M1172.5 426v5M1170 464.5h5M1172.5 462v5M1170 501.5h5M1172.5 499v5M1170 537.5h5M1172.5 535v5M1170 573.5h5M1172.5 571v5M1170 609.5h5M1172.5 607v5M1170 646.5h5M1172.5 644v5M1170 682.5h5M1172.5 680v5M1206 138.5h5M1208.5 136v5M1206 175.5h5M1208.5 173v5M1206 211.5h5M1208.5 209v5M1206 247.5h5M1208.5 245v5M1206 283.5h5M1208.5 281v5M1206 320.5h5M1208.5 318v5M1206 356.5h5M1208.5 354v5M1206 392.5h5M1208.5 390v5M1206 428.5h5M1208.5 426v5M1206 464.5h5M1208.5 462v5M1206 501.5h5M1208.5 499v5M1206 537.5h5M1208.5 535v5M1206 573.5h5M1208.5 571v5M1206 609.5h5M1208.5 607v5M1206 646.5h5M1208.5 644v5M1206 682.5h5M1208.5 680v5M1242 138.5h5M1244.5 136v5M1242 175.5h5M1244.5 173v5M1242 211.5h5M1244.5 209v5M1242 247.5h5M1244.5 245v5M1242 283.5h5M1244.5 281v5M1242 320.5h5M1244.5 318v5M1242 356.5h5M1244.5 354v5M1242 392.5h5M1244.5 390v5M1242 428.5h5M1244.5 426v5M1242 464.5h5M1244.5 462v5M1242 501.5h5M1244.5 499v5M1242 537.5h5M1244.5 535v5M1242 573.5h5M1244.5 571v5M1242 609.5h5M1244.5 607v5M1242 646.5h5M1244.5 644v5M1242 682.5h5M1244.5 680v5M1278 138.5h5M1280.5 136v5M1278 175.5h5M1280.5 173v5M1278 211.5h5M1280.5 209v5M1278 247.5h5M1280.5 245v5M1278 283.5h5M1280.5 281v5M1278 320.5h5M1280.5 318v5M1278 356.5h5M1280.5 354v5M1278 392.5h5M1280.5 390v5M1278 428.5h5M1280.5 426v5M1278 464.5h5M1280.5 462v5M1278 501.5h5M1280.5 499v5M1278 537.5h5M1280.5 535v5M1278 573.5h5M1280.5 571v5M1278 609.5h5M1280.5 607v5M1278 646.5h5M1280.5 644v5M1278 682.5h5M1280.5 680v5M1315 138.5h5M1317.5 136v5M1315 175.5h5M1317.5 173v5M1315 211.5h5M1317.5 209v5M1315 247.5h5M1317.5 245v5M1315 283.5h5M1317.5 281v5M1315 320.5h5M1317.5 318v5M1315 356.5h5M1317.5 354v5M1315 392.5h5M1317.5 390v5M1315 428.5h5M1317.5 426v5M1315 464.5h5M1317.5 462v5M1315 501.5h5M1317.5 499v5M1315 537.5h5M1317.5 535v5M1315 573.5h5M1317.5 571v5M1315 609.5h5M1317.5 607v5M1315 646.5h5M1317.5 644v5M1315 682.5h5M1317.5 680v5" stroke="#c8c8c8" stroke-width="1" fill="none"/><path d="M373 175h5v1h-5zM375 173h1v5h-1zM373 211h5v1h-5zM375 209h1v5h-1zM373 247h5v1h-5zM375 245h1v5h-1zM373 283h5v1h-5zM375 281h1v5h-1zM373 320h5v1h-5zM375 318h1v5h-1zM373 356h5v1h-5zM375 354h1v5h-1zM373 392h5v1h-5zM375 390h1v5h-1zM373 428h5v1h-5zM375 426h1v5h-1zM373 464h5v1h-5zM375 462h1v5h-1zM373 501h5v1h-5zM375 499h1v5h-1zM373 537h5v1h-5zM375 535h1v5h-1zM373 573h5v1h-5zM375 571h1v5h-1zM373 609h5v1h-5zM375 607h1v5h-1zM373 646h5v1h-5zM375 644h1v5h-1zM409 175h5v1h-5zM411 173h1v5h-1zM409 211h5v1h-5zM411 209h1v5h-1zM409 247h5v1h-5zM411 245h1v5h-1zM409 283h5v1h-5zM411 281h1v5h-1zM409 320h5v1h-5zM411 318h1v5h-1zM409 356h5v1h-5zM411 354h1v5h-1zM409 392h5v1h-5zM411 390h1v5h-1zM409 428h5v1h-5zM411 426h1v5h-1zM409 464h5v1h-5zM411 462h1v5h-1zM409 501h5v1h-5zM411 499h1v5h-1zM409 537h5v1h-5zM411 535h1v5h-1zM409 573h5v1h-5zM411 571h1v5h-1zM409 609h5v1h-5zM411 607h1v5h-1zM409 646h5v1h-5zM411 644h1v5h-1zM445 175h5v1h-5zM447 173h1v5h-1zM445 211h5v1h-5zM447 209h1v5h-1zM445 247h5v1h-5zM447 245h1v5h-1zM445 283h5v1h-5zM447 281h1v5h-1zM445 320h5v1h-5zM447 318h1v5h-1zM445 356h5v1h-5zM447 354h1v5h-1zM445 392h5v1h-5zM447 390h1v5h-1zM445 428h5v1h-5zM447 426h1v5h-1zM445 464h5v1h-5zM447 462h1v5h-1zM445 501h5v1h-5zM447 499h1v5h-1zM445 537h5v1h-5zM447 535h1v5h-1zM445 573h5v1h-5zM447 571h1v5h-1zM445 609h5v1h-5zM447 607h1v5h-1zM445 646h5v1h-5zM447 644h1v5h-1zM481 175h5v1h-5zM483 173h1v5h-1zM481 211h5v1h-5zM483 209h1v5h-1zM481 247h5v1h-5zM483 245h1v5h-1zM481 283h5v1h-5zM483 281h1v5h-1zM481 320h5v1h-5zM483 318h1v5h-1zM481 356h5v1h-5zM483 354h1v5h-1zM481 392h5v1h-5zM483 390h1v5h-1zM481 428h5v1h-5zM483 426h1v5h-1zM481 464h5v1h-5zM483 462h1v5h-1zM481 501h5v1h-5zM483 499h1v5h-1zM481 537h5v1h-5zM483 535h1v5h-1zM481 573h5v1h-5zM483 571h1v5h-1zM481 609h5v1h-5zM483 607h1v5h-1zM481 646h5v1h-5zM483 644h1v5h-1zM518 175h5v1h-5zM520 173h1v5h-1zM518 211h5v1h-5zM520 209h1v5h-1zM518 247h5v1h-5zM520 245h1v5h-1zM518 283h5v1h-5zM520 281h1v5h-1zM518 320h5v1h-5zM520 318h1v5h-1zM518 356h5v1h-5zM520 354h1v5h-1zM518 392h5v1h-5zM520 390h1v5h-1zM518 428h5v1h-5zM520 426h1v5h-1zM518 464h5v1h-5zM520 462h1v5h-1zM518 501h5v1h-5zM520 499h1v5h-1zM518 537h5v1h-5zM520 535h1v5h-1zM518 573h5v1h-5zM520 571h1v5h-1zM518 609h5v1h-5zM520 607h1v5h-1zM518 646h5v1h-5zM520 644h1v5h-1zM554 175h5v1h-5zM556 173h1v5h-1zM554 211h5v1h-5zM556 209h1v5h-1zM554 247h5v1h-5zM556 245h1v5h-1zM554 283h5v1h-5zM556 281h1v5h-1zM554 320h5v1h-5zM556 318h1v5h-1zM554 356h5v1h-5zM556 354h1v5h-1zM554 392h5v1h-5zM556 390h1v5h-1zM554 428h5v1h-5zM556 426h1v5h-1zM554 464h5v1h-5zM556 462h1v5h-1zM554 501h5v1h-5zM556 499h1v5h-1zM554 537h5v1h-5zM556 535h1v5h-1zM554 573h5v1h-5zM556 571h1v5h-1zM554 609h5v1h-5zM556 607h1v5h-1zM554 646h5v1h-5zM556 644h1v5h-1zM590 175h5v1h-5zM592 173h1v5h-1zM590 211h5v1h-5zM592 209h1v5h-1zM590 247h5v1h-5zM592 245h1v5h-1zM590 283h5v1h-5zM592 281h1v5h-1zM590 320h5v1h-5zM592 318h1v5h-1zM590 356h5v1h-5zM592 354h1v5h-1zM590 428h5v1h-5zM592 426h1v5h-1zM590 464h5v1h-5zM592 462h1v5h-1zM590 609h5v1h-5zM592 607h1v5h-1zM590 646h5v1h-5zM592 644h1v5h-1zM626 175h5v1h-5zM628 173h1v5h-1zM626 211h5v1h-5zM628 209h1v5h-1zM626 247h5v1h-5zM628 245h1v5h-1zM626 283h5v1h-5zM628 281h1v5h-1zM626 320h5v1h-5zM628 318h1v5h-1zM626 356h5v1h-5zM628 354h1v5h-1zM626 392h5v1h-5zM628 390h1v5h-1zM626 428h5v1h-5zM628 426h1v5h-1zM626 464h5v1h-5zM628 462h1v5h-1zM626 609h5v1h-5zM628 607h1v5h-1zM626 646h5v1h-5zM628 644h1v5h-1zM662 175h5v1h-5zM664 173h1v5h-1zM662 211h5v1h-5zM664 209h1v5h-1zM662 247h5v1h-5zM664 245h1v5h-1zM662 392h5v1h-5zM664 390h1v5h-1zM662 573h5v1h-5zM664 571h1v5h-1zM662 609h5v1h-5zM664 607h1v5h-1zM662 646h5v1h-5zM664 644h1v5h-1zM699 175h5v1h-5zM701 173h1v5h-1zM699 211h5v1h-5zM701 209h1v5h-1zM699 247h5v1h-5zM701 245h1v5h-1zM699 573h5v1h-5zM701 571h1v5h-1zM699 609h5v1h-5zM701 607h1v5h-1zM699 646h5v1h-5zM701 644h1v5h-1zM735 175h5v1h-5zM737 173h1v5h-1zM735 211h5v1h-5zM737 209h1v5h-1zM735 247h5v1h-5zM737 245h1v5h-1zM735 609h5v1h-5zM737 607h1v5h-1zM735 646h5v1h-5zM737 644h1v5h-1zM771 175h5v1h-5zM773 173h1v5h-1zM771 211h5v1h-5zM773 209h1v5h-1zM771 247h5v1h-5zM773 245h1v5h-1zM771 283h5v1h-5zM773 281h1v5h-1zM771 609h5v1h-5zM773 607h1v5h-1zM771 646h5v1h-5zM773 644h1v5h-1zM807 175h5v1h-5zM809 173h1v5h-1zM807 211h5v1h-5zM809 209h1v5h-1zM807 247h5v1h-5zM809 245h1v5h-1zM807 283h5v1h-5zM809 281h1v5h-1zM807 320h5v1h-5zM809 318h1v5h-1zM807 392h5v1h-5zM809 390h1v5h-1zM807 428h5v1h-5zM809 426h1v5h-1zM807 464h5v1h-5zM809 462h1v5h-1zM807 537h5v1h-5zM809 535h1v5h-1zM807 573h5v1h-5zM809 571h1v5h-1zM807 609h5v1h-5zM809 607h1v5h-1zM807 646h5v1h-5zM809 644h1v5h-1zM844 175h5v1h-5zM846 173h1v5h-1zM844 211h5v1h-5zM846 209h1v5h-1zM844 247h5v1h-5zM846 245h1v5h-1zM844 320h5v1h-5zM846 318h1v5h-1zM844 356h5v1h-5zM846 354h1v5h-1zM844 392h5v1h-5zM846 390h1v5h-1zM844 464h5v1h-5zM846 462h1v5h-1zM844 501h5v1h-5zM846 499h1v5h-1zM844 537h5v1h-5zM846 535h1v5h-1zM844 573h5v1h-5zM846 571h1v5h-1zM844 609h5v1h-5zM846 607h1v5h-1zM844 646h5v1h-5zM846 644h1v5h-1zM880 175h5v1h-5zM882 173h1v5h-1zM880 211h5v1h-5zM882 209h1v5h-1zM880 247h5v1h-5zM882 245h1v5h-1zM880 320h5v1h-5zM882 318h1v5h-1zM880 356h5v1h-5zM882 354h1v5h-1zM880 392h5v1h-5zM882 390h1v5h-1zM880 464h5v1h-5zM882 462h1v5h-1zM880 501h5v1h-5zM882 499h1v5h-1zM880 537h5v1h-5zM882 535h1v5h-1zM880 573h5v1h-5zM882 571h1v5h-1zM880 609h5v1h-5zM882 607h1v5h-1zM880 646h5v1h-5zM882 644h1v5h-1zM916 175h5v1h-5zM918 173h1v5h-1zM916 211h5v1h-5zM918 209h1v5h-1zM916 247h5v1h-5zM918 245h1v5h-1zM916 283h5v1h-5zM918 281h1v5h-1zM916 320h5v1h-5zM918 318h1v5h-1zM916 356h5v1h-5zM918 354h1v5h-1zM916 392h5v1h-5zM918 390h1v5h-1zM916 428h5v1h-5zM918 426h1v5h-1zM916 464h5v1h-5zM918 462h1v5h-1zM916 501h5v1h-5zM918 499h1v5h-1zM916 537h5v1h-5zM918 535h1v5h-1zM916 573h5v1h-5zM918 571h1v5h-1zM916 609h5v1h-5zM918 607h1v5h-1zM916 646h5v1h-5zM918 644h1v5h-1zM952 175h5v1h-5zM954 173h1v5h-1zM952 211h5v1h-5zM954 209h1v5h-1zM952 247h5v1h-5zM954 245h1v5h-1zM952 283h5v1h-5zM954 281h1v5h-1zM952 320h5v1h-5zM954 318h1v5h-1zM952 356h5v1h-5zM954 354h1v5h-1zM952 392h5v1h-5zM954 390h1v5h-1zM952 428h5v1h-5zM954 426h1v5h-1zM952 464h5v1h-5zM954 462h1v5h-1zM952 501h5v1h-5zM954 499h1v5h-1zM952 537h5v1h-5zM954 535h1v5h-1zM952 573h5v1h-5zM954 571h1v5h-1zM952 609h5v1h-5zM954 607h1v5h-1zM952 646h5v1h-5zM954 644h1v5h-1zM989 175h5v1h-5zM991 173h1v5h-1zM989 211h5v1h-5zM991 209h1v5h-1zM989 247h5v1h-5zM991 245h1v5h-1zM989 283h5v1h-5zM991 281h1v5h-1zM989 320h5v1h-5zM991 318h1v5h-1zM989 356h5v1h-5zM991 354h1v5h-1zM989 392h5v1h-5zM991 390h1v5h-1zM989 428h5v1h-5zM991 426h1v5h-1zM989 464h5v1h-5zM991 462h1v5h-1zM989 501h5v1h-5zM991 499h1v5h-1zM989 537h5v1h-5zM991 535h1v5h-1zM989 573h5v1h-5zM991 571h1v5h-1zM989 609h5v1h-5zM991 607h1v5h-1zM989 646h5v1h-5zM991 644h1v5h-1zM1025 175h5v1h-5zM1027 173h1v5h-1zM1025 211h5v1h-5zM1027 209h1v5h-1zM1025 247h5v1h-5zM1027 245h1v5h-1zM1025 283h5v1h-5zM1027 281h1v5h-1zM1025 320h5v1h-5zM1027 318h1v5h-1zM1025 356h5v1h-5zM1027 354h1v5h-1zM1025 392h5v1h-5zM1027 390h1v5h-1zM1025 428h5v1h-5zM1027 426h1v5h-1zM1025 464h5v1h-5zM1027 462h1v5h-1zM1025 501h5v1h-5zM1027 499h1v5h-1zM1025 537h5v1h-5zM1027 535h1v5h-1zM1025 573h5v1h-5zM1027 571h1v5h-1zM1025 609h5v1h-5zM1027 607h1v5h-1zM1025 646h5v1h-5zM1027 644h1v5h-1zM1061 175h5v1h-5zM1063 173h1v5h-1zM1061 211h5v1h-5zM1063 209h1v5h-1zM1061 247h5v1h-5zM1063 245h1v5h-1zM1061 283h5v1h-5zM1063 281h1v5h-1zM1061 320h5v1h-5zM1063 318h1v5h-1zM1061 356h5v1h-5zM1063 354h1v5h-1zM1061 392h5v1h-5zM1063 390h1v5h-1zM1061 428h5v1h-5zM1063 426h1v5h-1zM1061 464h5v1h-5zM1063 462h1v5h-1zM1061 501h5v1h-5zM1063 499h1v5h-1zM1061 537h5v1h-5zM1063 535h1v5h-1zM1061 573h5v1h-5zM1063 571h1v5h-1zM1061 609h5v1h-5zM1063 607h1v5h-1zM1061 646h5v1h-5zM1063 644h1v5h-1z" fill="#dc9684"/><rect x="363" y="390" width="5" height="5" fill="#4aa0f0"/><circle cx="657" cy="242" r="16" fill="#ffff00"/><circle cx="1065" cy="240" r="16" fill="#ffff00"/><circle cx="393" cy="330" r="16" fill="#ffff00"/><circle cx="1062" cy="335" r="16" fill="#ffff00"/><circle cx="391" cy="445" r="16" fill="#ffff00"/><circle cx="756" cy="641" r="16" fill="#ffff00"/><circle cx="848" cy="638" r="16" fill="#ffff00"/><circle cx="677" cy="301" r="2.8" fill="#58a8f0" shape-rendering="geometricPrecision"/><circle cx="737" cy="301" r="2.8" fill="#58a8f0" shape-rendering="geometricPrecision"/><circle cx="677" cy="348" r="2.8" fill="#58a8f0" shape-rendering="geometricPrecision"/><circle cx="677" cy="362" r="2.8" fill="#58a8f0" shape-rendering="geometricPrecision"/><circle cx="745" cy="348" r="2.8" fill="#58a8f0" shape-rendering="geometricPrecision"/><circle cx="763" cy="288" r="2.8" fill="#58a8f0" shape-rendering="geometricPrecision"/><circle cx="796" cy="288" r="2.8" fill="#58a8f0" shape-rendering="geometricPrecision"/><circle cx="810" cy="288" r="2.8" fill="#58a8f0" shape-rendering="geometricPrecision"/><circle cx="803" cy="295" r="2.8" fill="#58a8f0" shape-rendering="geometricPrecision"/><circle cx="804" cy="318" r="2.8" fill="#58a8f0" shape-rendering="geometricPrecision"/><circle cx="550" cy="392" r="2.8" fill="#58a8f0" shape-rendering="geometricPrecision"/><circle cx="623" cy="392" r="2.8" fill="#58a8f0" shape-rendering="geometricPrecision"/><circle cx="670" cy="392" r="2.8" fill="#58a8f0" shape-rendering="geometricPrecision"/><circle cx="677" cy="385" r="2.8" fill="#58a8f0" shape-rendering="geometricPrecision"/><circle cx="677" cy="400" r="2.8" fill="#58a8f0" shape-rendering="geometricPrecision"/><circle cx="677" cy="413" r="2.8" fill="#58a8f0" shape-rendering="geometricPrecision"/><circle cx="803" cy="397" r="2.8" fill="#58a8f0" shape-rendering="geometricPrecision"/><circle cx="803" cy="419" r="2.8" fill="#58a8f0" shape-rendering="geometricPrecision"/><circle cx="811" cy="426" r="2.8" fill="#58a8f0" shape-rendering="geometricPrecision"/><circle cx="824" cy="426" r="2.8" fill="#58a8f0" shape-rendering="geometricPrecision"/><circle cx="803" cy="434" r="2.8" fill="#58a8f0" shape-rendering="geometricPrecision"/><circle cx="908" cy="288" r="2.8" fill="#58a8f0" shape-rendering="geometricPrecision"/><circle cx="1092" cy="288" r="2.8" fill="#58a8f0" shape-rendering="geometricPrecision"/><circle cx="803" cy="396" r="2.8" fill="#58a8f0" shape-rendering="geometricPrecision"/><circle cx="826" cy="426" r="2.8" fill="#58a8f0" shape-rendering="geometricPrecision"/><circle cx="898" cy="426" r="2.8" fill="#58a8f0" shape-rendering="geometricPrecision"/><circle cx="803" cy="460" r="2.8" fill="#58a8f0" shape-rendering="geometricPrecision"/><circle cx="676" cy="490" r="2.8" fill="#58a8f0" shape-rendering="geometricPrecision"/><circle cx="676" cy="505" r="2.8" fill="#58a8f0" shape-rendering="geometricPrecision"/><circle cx="676" cy="518" r="2.8" fill="#58a8f0" shape-rendering="geometricPrecision"/><circle cx="655" cy="512" r="2.8" fill="#58a8f0" shape-rendering="geometricPrecision"/><circle cx="671" cy="512" r="2.8" fill="#58a8f0" shape-rendering="geometricPrecision"/><circle cx="583" cy="512" r="2.8" fill="#58a8f0" shape-rendering="geometricPrecision"/><circle cx="803" cy="538" r="2.8" fill="#58a8f0" shape-rendering="geometricPrecision"/><circle cx="676" cy="564" r="2.8" fill="#58a8f0" shape-rendering="geometricPrecision"/><circle cx="580" cy="570" r="2.8" fill="#58a8f0" shape-rendering="geometricPrecision"/><circle cx="655" cy="570" r="2.8" fill="#58a8f0" shape-rendering="geometricPrecision"/><circle cx="671" cy="570" r="2.8" fill="#58a8f0" shape-rendering="geometricPrecision"/><circle cx="684" cy="570" r="2.8" fill="#58a8f0" shape-rendering="geometricPrecision"/><circle cx="706" cy="570" r="2.8" fill="#58a8f0" shape-rendering="geometricPrecision"/><circle cx="781" cy="570" r="2.8" fill="#58a8f0" shape-rendering="geometricPrecision"/><circle cx="795" cy="570" r="2.8" fill="#58a8f0" shape-rendering="geometricPrecision"/><circle cx="803" cy="564" r="2.8" fill="#58a8f0" shape-rendering="geometricPrecision"/><circle cx="803" cy="578" r="2.8" fill="#58a8f0" shape-rendering="geometricPrecision"/><circle cx="803" cy="624" r="2.8" fill="#58a8f0" shape-rendering="geometricPrecision"/>
</svg><div class="lb" style="left:352px;top:387px;color:#fff">RF</div><div class="lb" style="left:367px;top:387px;color:#fff">in</div><div class="lb" style="left:352px;top:400px;color:#fff">Port</div><div class="lb" style="left:448px;top:387px;color:#fff">TL1</div><div class="lb" style="left:444px;top:400px;color:#fff">MLINsc_mrt_MC_GRM36COG0_C_19960826</div><div class="lb" style="left:650px;top:400px;color:#fff">MLIN</div><div class="lb" style="left:581px;top:388px;color:#ffffff">C2</div><div class="lb" style="left:638px;top:388px;color:#fff">TL2</div><div class="lb" style="left:664px;top:388px;color:#fff">Tee1</div><div class="lb" style="left:668px;top:370px;color:#fff">TL3</div><div class="lb" style="left:663px;top:380px;color:#fff">MLIN</div><div class="lb" style="left:663px;top:413px;color:#fff">MLIN</div><div class="lb" style="left:632px;top:331px;color:#fff">pb_hp_AT41411_19921101</div><div class="lb" style="left:702px;top:319px;color:#ffffff">Q1</div><div class="lb" style="left:733px;top:309px;color:#ffffff">9</div><div class="lb" style="left:720px;top:364px;color:#fff">el_cfd_0603HS_K_19960826</div><div class="lb" style="left:769px;top:283px;color:#fff">TL17</div><div class="lb" style="left:789px;top:283px;color:#fff">Tee1</div><div class="lb" style="left:809px;top:283px;color:#fff">TL18</div><div class="lb" style="left:865px;top:283px;color:#ffffff">C8</div><div class="lb" style="left:986px;top:283px;color:#fff">TL19</div><div class="lb" style="left:1077px;top:283px;color:#fff">RFout</div><div class="lb" style="left:1080px;top:296px;color:#fff">Port</div><div class="lb" style="left:764px;top:295px;color:#fff">MLIN</div><div class="lb" style="left:775px;top:295px;color:#fff">sc_mrt_MC_GRM36COG0_C_19960826</div><div class="lb" style="left:797px;top:295px;color:#fff">TEE</div><div class="lb" style="left:986px;top:295px;color:#fff">MLIN</div><div class="lb" style="left:791px;top:303px;color:#fff">TL16</div><div class="lb" style="left:790px;top:313px;color:#fff">MLIN</div><div class="lb" style="left:801px;top:357px;color:#ffffff">L2</div><div class="lb" style="left:791px;top:403px;color:#fff">TL15</div><div class="lb" style="left:791px;top:415px;color:#fff">MLIN</div><div class="lb" style="left:791px;top:422px;color:#fff">Tee14</div><div class="lb" style="left:749px;top:434px;color:#fff">sc_mrt_MC_GRM36X7R0_K_19960826</div><div class="lb" style="left:791px;top:442px;color:#fff">TL13</div><div class="lb" style="left:791px;top:454px;color:#fff">MLIN</div><div class="lb" style="left:856px;top:422px;color:#ffffff">C1</div><div class="lb" style="left:893px;top:422px;color:#fff">R6</div><div class="lb" style="left:591px;top:459px;color:#fff">el_cfd_0603HS_K_19960826</div><div class="lb" style="left:668px;top:493px;color:#fff">TL5</div><div class="lb" style="left:659px;top:506px;color:#fff">MLIN</div><div class="lb" style="left:662px;top:506px;color:#fff">Tee2</div><div class="lb" style="left:575px;top:507px;color:#fff">R4</div><div class="lb" style="left:614px;top:507px;color:#ffffff">C5</div><div class="lb" style="left:506px;top:516px;color:#fff">sc_mrt_MC2GRM36X7R0_W1960828</div><div class="lb" style="left:708px;top:505px;color:#fff">sr_ims_RC-I_0603_J_19950814</div><div class="lb" style="left:796px;top:491px;color:#ffffff">R3</div><div class="lb" style="left:668px;top:538px;color:#fff">TL7</div><div class="lb" style="left:663px;top:549px;color:#fff">MLIN</div><div class="lb" style="left:672px;top:444px;color:#ffffff">L1</div><div class="lb" style="left:790px;top:546px;color:#fff">TL12</div><div class="lb" style="left:790px;top:558px;color:#fff">MLIN</div><div class="lb" style="left:779px;top:568px;color:#fff">TL</div><div class="lb" style="left:795px;top:568px;color:#fff">Tee4</div><div class="lb" style="left:574px;top:567px;color:#fff">R5</div><div class="lb" style="left:611px;top:567px;color:#ffffff">R1</div><div class="lb" style="left:658px;top:567px;color:#fff">TL8</div><div class="lb" style="left:672px;top:567px;color:#fff">Tee</div><div class="lb" style="left:690px;top:567px;color:#fff">TL9</div><div class="lb" style="left:737px;top:568px;color:#ffffff">R2</div><div class="lb" style="left:521px;top:579px;color:#fff">sr_ims_RC-I_0603_J_19950814</div><div class="lb" style="left:640px;top:579px;color:#fff">TL_I_19950814</div><div class="lb" style="left:700px;top:579px;color:#fff">I_0603_J_19950814</div><div class="lb" style="left:797px;top:579px;color:#fff">4</div><div class="lb" style="left:790px;top:597px;color:#fff">TL11</div><div class="lb" style="left:790px;top:609px;color:#fff">MLIN</div><div class="lb" style="left:793px;top:620px;color:#fff">Vcc</div><div class="lb" style="left:789px;top:631px;color:#fff">Port</div>
<div id="vscroll" class="abs">
<div class="abs" style="left:4px;top:8px;width:0;height:0;border-left:4px solid transparent;border-right:4px solid transparent;border-bottom:4px solid #606060"></div>
<div class="thumb" style="left:1px;top:260px;width:14px;height:56px;background:linear-gradient(90deg,#f4f4f4,#e0e0e0)"></div>
<div class="abs" style="left:4px;top:285px;width:7px;height:5px;border-top:1px solid #777;border-bottom:1px solid #777"></div><div class="abs" style="left:4px;top:287px;width:7px;height:1px;background:#777"></div>
<div class="abs" style="left:4px;top:567px;width:0;height:0;border-left:4px solid transparent;border-right:4px solid transparent;border-top:4px solid #606060"></div>
</div>
<div id="hscroll" class="abs">
<div class="abs" style="left:6px;top:4px;width:0;height:0;border-top:4px solid transparent;border-bottom:4px solid transparent;border-right:4px solid #606060"></div>
<div class="thumb" style="left:573px;top:1px;width:91px;height:14px;background:linear-gradient(#f6f6f6,#dcdcdc)"></div>
<div class="abs" style="left:614px;top:5px;width:1px;height:6px;background:#555"></div><div class="abs" style="left:617px;top:5px;width:1px;height:6px;background:#555"></div><div class="abs" style="left:620px;top:5px;width:1px;height:6px;background:#555"></div>
<div class="abs" style="left:1226px;top:4px;width:0;height:0;border-top:4px solid transparent;border-bottom:4px solid transparent;border-left:4px solid #606060"></div>
</div>
<div id="status" class="abs">
<span style="left:5px">Select: Enter the starting point</span>
<span style="left:806px">0 items</span>
<span style="left:919px;color:#f8f060">hole</span>
<span style="left:985px;letter-spacing:-0.25px">-1.1000, 1.4000</span>
<span style="left:1227px">mm</span>
<span style="left:1258px">A/RF</span>
<span style="left:1295px">SimSchem</span>
</div>
<div class="ssep" style="left:798px"></div><div class="ssep" style="left:912px"></div><div class="ssep" style="left:977px"></div><div class="ssep" style="left:1098px"></div><div class="ssep" style="left:1219px"></div><div class="ssep" style="left:1251px"></div><div class="ssep" style="left:1288px"></div>
</body></html>
